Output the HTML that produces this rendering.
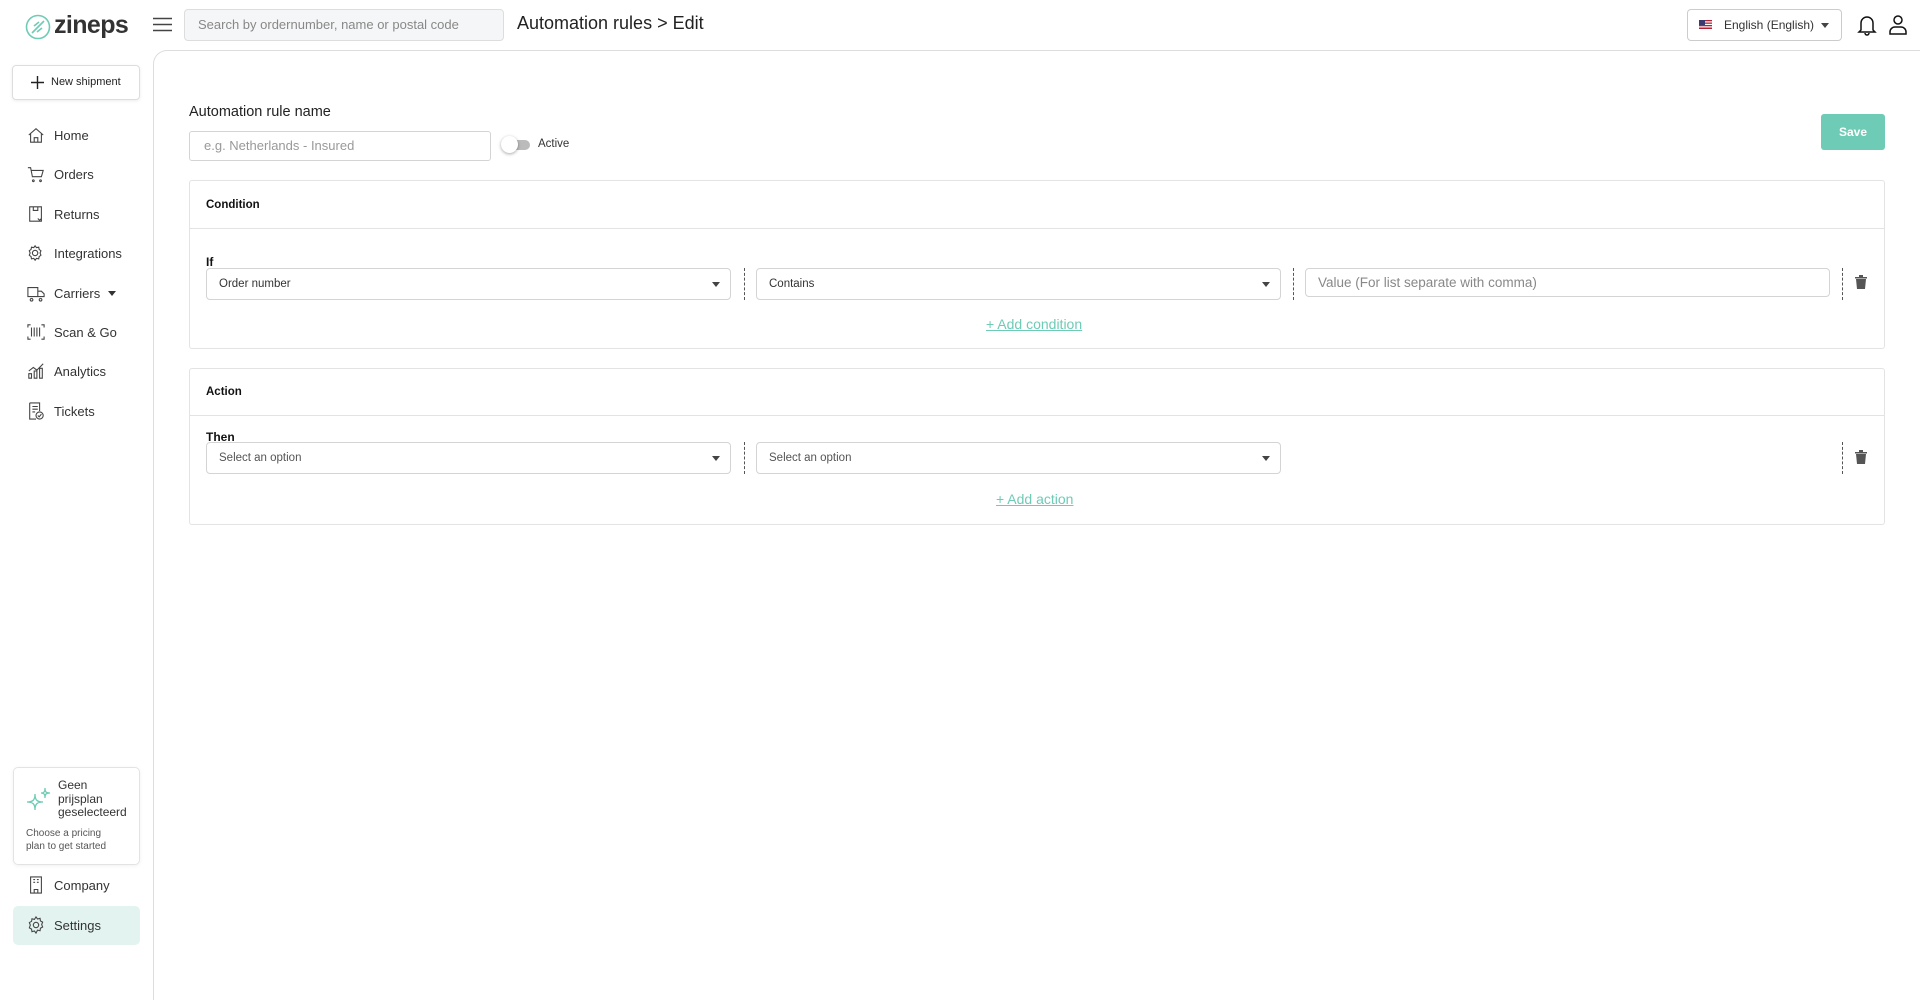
<!DOCTYPE html>
<html><head><meta charset="utf-8"><style>
*{box-sizing:border-box;margin:0;padding:0}
body{width:1920px;height:958px;background:#fff;font-family:"Liberation Sans",sans-serif;color:#222;position:relative;overflow:hidden}
.a{position:absolute}
.nav{position:absolute;left:27px;display:flex;align-items:center;font-size:13px;color:#333}
.nav svg{width:18px;height:18px;margin-right:9px;fill:none;stroke:#444;stroke-width:1.2}
.sel{position:absolute;height:32px;border:1px solid #d4d4d4;border-radius:4px;font-size:11.5px;color:#333;padding-left:12px;line-height:30px}
.sel .ar{position:absolute;right:10px;top:13px;width:0;height:0;border-left:4.5px solid transparent;border-right:4.5px solid transparent;border-top:5px solid #444}
.dv{position:absolute;width:0;height:32px;border-left:1px dashed #555}
.card{position:absolute;left:189px;width:1696px;border:1px solid #e3e3e3;border-radius:3px}
.lnk{position:absolute;font-size:14px;color:#6ecbb5;text-decoration:underline}
.trash{position:absolute;width:12px;height:14px}
</style></head><body>
<svg class="a" style="left:25px;top:14px" width="26" height="26" viewBox="0 0 26 26"><circle cx="13" cy="13" r="11.5" fill="none" stroke="#6ecbb5" stroke-width="1.6"/><path d="M7 19 L19 7 M9 12 L14 8 M12 18 L17 14" stroke="#6ecbb5" stroke-width="1.6" fill="none"/></svg>
<div class="a" style="left:54px;top:11px;font-size:25px;font-weight:bold;color:#333;letter-spacing:-0.6px">zineps</div>
<svg class="a" style="left:153px;top:17px" width="19" height="15"><path d="M0 1.5H19M0 7.5H19M0 13.5H19" stroke="#444" stroke-width="1.6"/></svg>
<div class="a" style="left:184px;top:9px;width:320px;height:32px;background:#f5f6f7;border:1px solid #ddd;border-radius:4px;font-size:13px;color:#888;padding-left:13px;line-height:30px">Search by ordernumber, name or postal code</div>
<div class="a" style="left:517px;top:13px;font-size:18px;color:#222">Automation rules &gt; Edit</div>
<div class="a" style="left:1687px;top:9px;width:155px;height:32px;border:1px solid #ccc;border-radius:4px;font-size:12px;color:#333;line-height:30px;padding-left:36px">English (English)</div>
<svg class="a" style="left:1699px;top:20px" width="13" height="9"><rect width="13" height="9" fill="#b22234"/><rect y="1.3" width="13" height="1.2" fill="#fff"/><rect y="3.8" width="13" height="1.2" fill="#fff"/><rect y="6.3" width="13" height="1.2" fill="#fff"/><rect width="6" height="5" fill="#3c3b6e"/></svg>
<div class="a" style="left:1821px;top:23px;border-left:4.5px solid transparent;border-right:4.5px solid transparent;border-top:5px solid #444"></div>
<svg class="a" style="left:1857px;top:14px" width="20" height="22" viewBox="0 0 20 22" fill="none" stroke="#111" stroke-width="1.5"><path d="M4 16V9a6 6 0 0 1 12 0v7l2 2H2z M8 19a2 2 0 0 0 4 0"/></svg>
<svg class="a" style="left:1889px;top:14px" width="18" height="22" viewBox="0 0 18 22" fill="none" stroke="#111" stroke-width="1.5"><circle cx="9" cy="6" r="4"/><path d="M1 20v-2a5 5 0 0 1 5-5h6a5 5 0 0 1 5 5v2z"/></svg>
<div class="a" style="left:153px;top:50px;width:1800px;height:950px;border-left:1px solid #ddd;border-top:1px solid #ddd;border-top-left-radius:14px"></div>
<div class="a" style="left:12px;top:65px;width:128px;height:35px;border:1px solid #ddd;border-radius:4px;box-shadow:0 1px 3px rgba(0,0,0,.08);font-size:11px;color:#222;line-height:33px;padding-left:38px">New shipment</div>
<svg class="a" style="left:31px;top:76px" width="13" height="13"><path d="M6.5 0V13M0 6.5H13" stroke="#222" stroke-width="1.4"/></svg>
<div class="nav" style="top:126px"><svg viewBox="0 0 20 20"><path d="M2 10L10 3l8 7M4 8.5V18h12V8.5M8 18v-5h4v5"/></svg>Home</div>
<div class="nav" style="top:165px"><svg viewBox="0 0 20 20"><path d="M1 3h3l2 10h10l2-7H5M7 16.5a1 1 0 1 0 .1 0M15 16.5a1 1 0 1 0 .1 0"/></svg>Orders</div>
<div class="nav" style="top:205px"><svg viewBox="0 0 20 20"><path d="M3 2h13v16H3z M7 2v4h5V2 M12 15l2 2 2-2"/></svg>Returns</div>
<div class="nav" style="top:244px"><svg viewBox="0 0 20 20"><circle cx="9" cy="10" r="3"/><path d="M9 2l1.5 2 2.5-.5.5 2.5 2 1.5-1 2.5 1 2.5-2 1.5-.5 2.5-2.5-.5L9 18l-1.5-2-2.5.5-.5-2.5-2-1.5 1-2.5-1-2.5 2-1.5.5-2.5 2.5.5z"/></svg>Integrations</div>
<div class="nav" style="top:284px"><svg viewBox="0 0 20 20"><path d="M1 4h11v10H1z M12 8h4l3 3v3h-7 M5 16a1.5 1.5 0 1 0 .1 0 M15 16a1.5 1.5 0 1 0 .1 0"/></svg>Carriers<span style="margin-left:8px;border-left:4px solid transparent;border-right:4px solid transparent;border-top:5px solid #333"></span></div>
<div class="nav" style="top:323px"><svg viewBox="0 0 20 20"><path d="M1 5V2h3M16 2h3v3M19 15v3h-3M4 18H1v-3M5 5v10M8 5v10M11 5v10M14 5v10"/></svg>Scan &amp; Go</div>
<div class="nav" style="top:362px"><svg viewBox="0 0 20 20"><path d="M2 18v-5h3v5zM8 18v-8h3v8zM14 18V7h3v11zM2 10l5-4 4 3 7-7"/></svg>Analytics</div>
<div class="nav" style="top:402px"><svg viewBox="0 0 20 20"><path d="M3 1h11v9M3 1v18h7M6 5h6M6 8h6M6 11h3"/><circle cx="14" cy="15" r="4"/><path d="M12 15l1.5 1.5 2.5-3"/></svg>Tickets</div>
<div class="a" style="left:13px;top:767px;width:127px;height:98px;border:1px solid #e3e3e3;border-radius:5px;box-shadow:0 1px 4px rgba(0,0,0,.06)"></div>
<svg class="a" style="left:26px;top:787px" width="26" height="26" viewBox="0 0 26 26" fill="none" stroke="#6ecbb5" stroke-width="1.3"><path d="M9 7C9 13 7 15 1 15C7 15 9 17 9 23C9 17 11 15 17 15C11 15 9 13 9 7z M19 1C19 5 18 6 15 6C18 6 19 7 19 11C19 7 20 6 24 6C20 6 19 5 19 1z"/></svg>
<div class="a" style="left:58px;top:779px;font-size:12px;line-height:13.5px;color:#333">Geen<br>prijsplan<br>geselecteerd</div>
<div class="a" style="left:26px;top:827px;font-size:10px;line-height:13px;color:#555">Choose a pricing<br>plan to get started</div>
<div class="nav" style="top:876px"><svg viewBox="0 0 20 20"><path d="M4 1h12v18H4z M7 4h2M11 4h2M7 7h2M11 7h2M8 19v-4h4v4"/></svg>Company</div>
<div class="a" style="left:13px;top:906px;width:127px;height:39px;background:#e3f4f0;border-radius:5px"></div>
<div class="nav" style="top:916px"><svg viewBox="0 0 20 20"><circle cx="10" cy="10" r="3"/><path d="M10 1l1.7 2.3 2.8-.7.4 2.8 2.5 1.4-1.1 2.7 1.1 2.7-2.5 1.4-.4 2.8-2.8-.7L10 19l-1.7-2.3-2.8.7-.4-2.8-2.5-1.4L3.7 10 2.6 7.3 5.1 5.9l.4-2.8 2.8.7z"/></svg>Settings</div>
<div class="a" style="left:189px;top:104px;font-size:14.5px;color:#222">Automation rule name</div>
<div class="a" style="left:189px;top:131px;width:302px;height:30px;border:1px solid #d4d4d4;border-radius:3px;font-size:13px;color:#999;padding-left:14px;line-height:28px">e.g. Netherlands - Insured</div>
<div class="a" style="left:504px;top:140px;width:26px;height:10px;border-radius:5px;background:#bbb"></div>
<div class="a" style="left:501px;top:136px;width:17px;height:17px;border-radius:50%;background:#fff;box-shadow:0 1px 3px rgba(0,0,0,.35)"></div>
<div class="a" style="left:538px;top:138px;font-size:11.5px;color:#333">Active</div>
<div class="a" style="left:1821px;top:114px;width:64px;height:36px;background:#6ecbb5;border-radius:3px;color:#fff;font-size:12px;font-weight:bold;text-align:center;line-height:36px">Save</div>
<div class="card" style="top:180px;height:169px"><div style="height:48px;border-bottom:1px solid #e3e3e3;font-size:11.5px;font-weight:bold;padding-left:16px;line-height:48px;color:#111">Condition</div></div>
<div class="a" style="left:206px;top:255px;font-size:12px;font-weight:bold;color:#111">If</div>
<div class="sel" style="left:206px;top:268px;width:525px">Order number<span class="ar"></span></div>
<div class="dv" style="left:744px;top:268px"></div>
<div class="sel" style="left:756px;top:268px;width:525px">Contains<span class="ar"></span></div>
<div class="dv" style="left:1293px;top:268px"></div>
<div class="sel" style="left:1305px;top:268px;width:525px;height:29px;line-height:27px;font-size:13.5px;color:#888">Value (For list separate with comma)</div>
<div class="dv" style="left:1842px;top:268px"></div>
<svg class="trash" style="left:1855px;top:275px" viewBox="0 0 12 14"><path d="M0 2h12v1.5H0zM4 0h4v2H4zM1 4h10l-1 10H2z" fill="#555"/></svg>
<div class="lnk" style="left:986px;top:316px">+ Add condition</div>
<div class="card" style="top:368px;height:157px"><div style="height:47px;border-bottom:1px solid #e3e3e3;font-size:11.5px;font-weight:bold;padding-left:16px;line-height:47px;color:#111">Action</div></div>
<div class="a" style="left:206px;top:430px;font-size:12px;font-weight:bold;color:#111">Then</div>
<div class="sel" style="left:206px;top:442px;width:525px;color:#555">Select an option<span class="ar"></span></div>
<div class="dv" style="left:744px;top:442px"></div>
<div class="sel" style="left:756px;top:442px;width:525px;color:#555">Select an option<span class="ar"></span></div>
<div class="dv" style="left:1842px;top:442px"></div>
<svg class="trash" style="left:1855px;top:450px" viewBox="0 0 12 14"><path d="M0 2h12v1.5H0zM4 0h4v2H4zM1 4h10l-1 10H2z" fill="#555"/></svg>
<div class="lnk" style="left:996px;top:491px">+ Add action</div>
</body></html>
